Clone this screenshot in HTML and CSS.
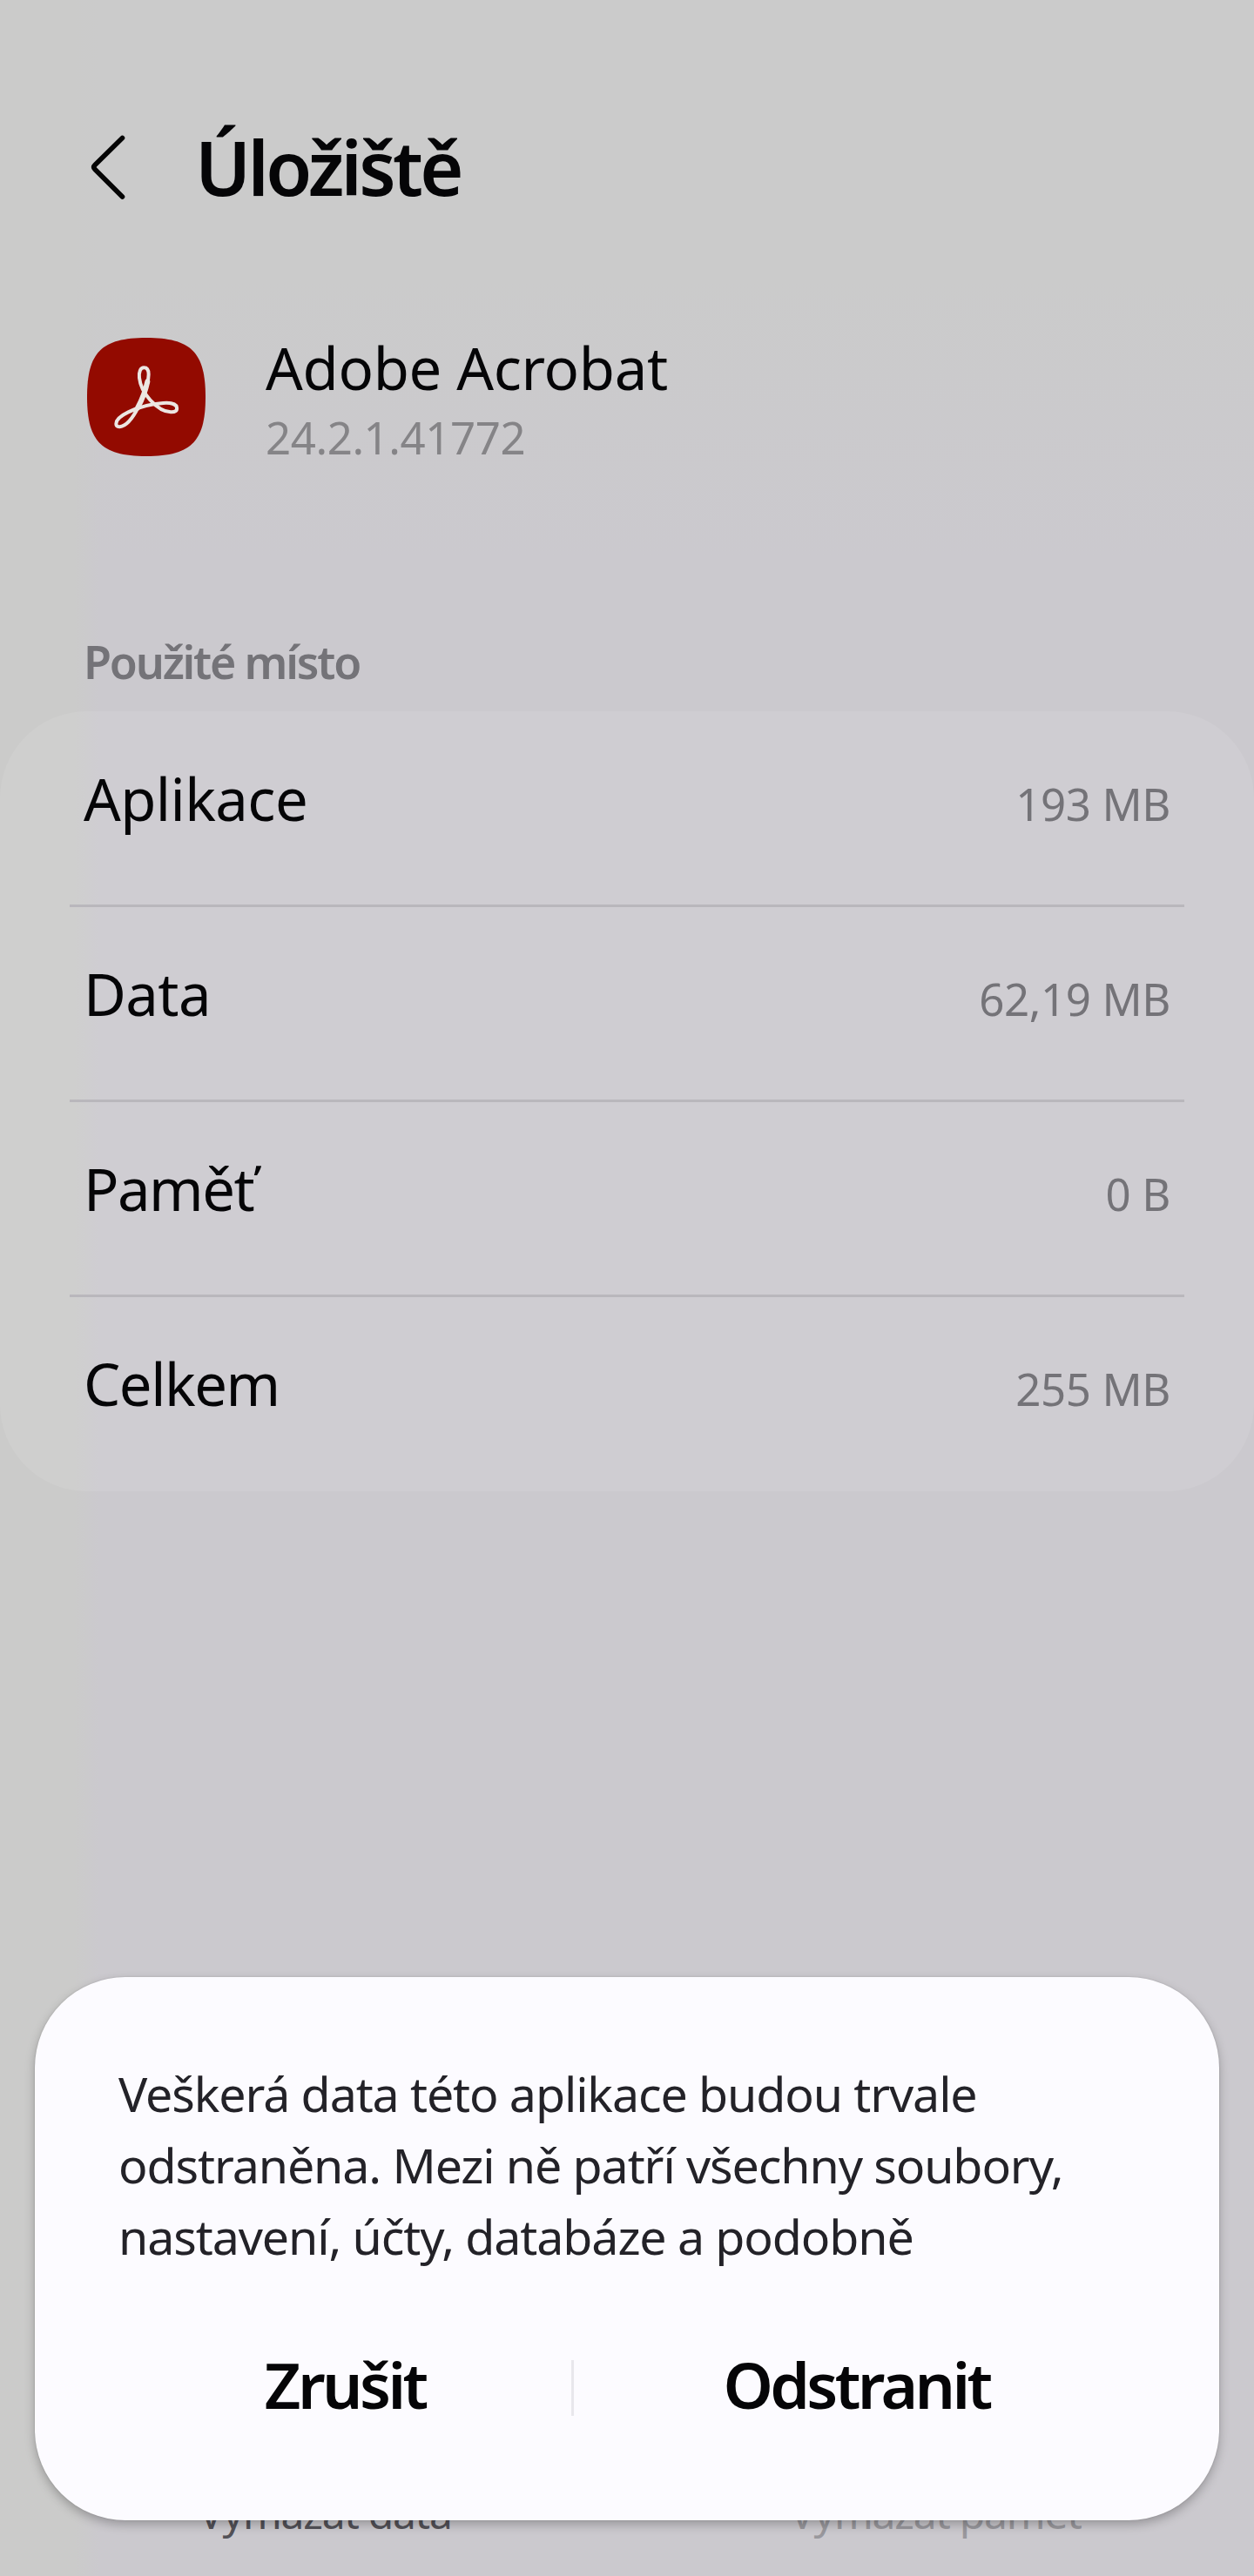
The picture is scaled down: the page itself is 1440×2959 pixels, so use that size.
FILE: index.html
```html
<!DOCTYPE html>
<html lang="cs">
<head>
    <title>Úložiště</title>
    <meta charset="utf-8">
    <link rel="stylesheet" href="styles.css">
</head>
<body>
    <div class="page">
        <header class="header">
            <svg class="back-icon" viewBox="0 0 44 80" fill="none">
                <path d="M38.5 6.5 L7 37.5 Q4.5 40 7 42.5 L38.5 74" stroke="#050505" stroke-width="5.6" stroke-linecap="round" stroke-linejoin="round"/>
            </svg>
            <h1 class="title">Úložiště</h1>
        </header>

        <div class="app">
            <svg class="app-icon" viewBox="30 24 408 408" fill="none">
                <path d="M234 24 C388 24 438 74 438 228 C438 382 388 432 234 432 C80 432 30 382 30 228 C30 74 80 24 234 24 Z" fill="#930a00"/>
                <path d="M226 127 C213 127 208 142 210 162 C213 190 228 217 247 238 C268 261 293 279 318 280 C334 281 341 275 339 264 C337 252 318 247 292 249 C250 252 205 264 172 280 C145 293 130 307 130 320 C130 330 139 333 150 329 C175 320 198 283 215 244 C232 206 242 173 242 150 C242 136 237 127 226 127 Z" stroke="#ece6e2" stroke-width="12" stroke-linejoin="round"/>
                <path d="M238 175 C231 208 221 234 204 266" stroke="#ece6e2" stroke-width="18" stroke-linecap="round"/>
            </svg>
            <div>
                <div class="app-name">Adobe Acrobat</div>
                <div class="app-version">24.2.1.41772</div>
            </div>
        </div>

        <h2 class="section-title">Použité místo</h2>
        <div class="card">
            <div class="row">
                <span class="row-name">Aplikace</span>
                <span class="row-value">193 MB</span>
            </div>
            <div class="row">
                <span class="row-name">Data</span>
                <span class="row-value">62,19 MB</span>
            </div>
            <div class="row">
                <span class="row-name tight">Paměť</span>
                <span class="row-value">0 B</span>
            </div>
            <div class="row">
                <span class="row-name tight">Celkem</span>
                <span class="row-value">255 MB</span>
            </div>
        </div>

        <footer class="footer">
            <div class="footer-btn">Vymazat data</div>
            <div class="footer-btn disabled">Vymazat paměť</div>
        </footer>
    </div>

    <div class="dialog">
        <p class="dialog-text">Veškerá data této aplikace budou trvale<br>odstraněna. Mezi ně patří všechny soubory,<br>nastavení, účty, databáze a podobně</p>
        <div class="dialog-buttons">
            <button class="dialog-btn">Zrušit</button>
            <span class="dialog-divider"></span>
            <button class="dialog-btn">Odstranit</button>
        </div>
    </div>
</body>
</html>
```
FILE: styles.css
```css
* {
    box-sizing: border-box;
}
body {
    margin: 0;
    position: relative;
    width: 1440px;
    height: 2959px;
    overflow: hidden;
    font-family: "Noto Sans", sans-serif;
    color: #050507;
    background: linear-gradient(to right, #cbcbca 85px, transparent 115px),
                linear-gradient(#cbcbcb 320px, #cbc9ce 640px);
}
.page {
    height: 100%;
    display: flex;
    flex-direction: column;
}
.header {
    display: flex;
    align-items: center;
    height: 120px;
    margin-top: 132px;
    padding-left: 102px;
}
.back-icon {
    width: 44px;
    height: 80px;
}
.title {
    margin: 0 0 0 78px;
    font-size: 86px;
    font-weight: 600;
    line-height: 120px;
    letter-spacing: -3.7px;
}
.app {
    display: flex;
    margin-top: 130px;
    padding-left: 100px;
}
.app-icon {
    width: 136px;
    height: 136px;
    margin: 6px 69px 0 0;
}
.app-name {
    font-size: 67px;
    line-height: 80px;
    letter-spacing: -0.3px;
}
.app-version {
    font-size: 51px;
    line-height: 80px;
    letter-spacing: -0.45px;
    color: #858487;
}
.section-title {
    margin: 188px 0 27px 96px;
    font-size: 52px;
    font-weight: 600;
    line-height: 60px;
    letter-spacing: -2.2px;
    color: #747378;
}
.card {
    height: 896px;
    padding: 1px 80px 0;
    border-radius: 100px;
    background-color: rgba(255, 255, 255, 0.09);
}
.row {
    display: flex;
    justify-content: space-between;
    align-items: baseline;
    height: 224px;
    padding: 0 16px;
    border-bottom: 3px solid #b9b7bc;
}
.row:last-child {
    border-bottom: none;
}
.row-name {
    font-size: 67px;
    line-height: 198px;
    letter-spacing: -0.6px;
}
.row-name.tight {
    letter-spacing: -1.5px;
}
.row-value {
    font-size: 51px;
    line-height: 70px;
    letter-spacing: -0.4px;
    color: #747378;
}
.footer {
    display: flex;
    height: 144px;
    margin-top: auto;
    padding-left: 228px;
    font-size: 48px;
    line-height: 144px;
    letter-spacing: -1.2px;
    color: #535258;
}
.footer-btn {
    width: 679px;
}
.footer-btn.disabled {
    width: 400px;
    color: #99989d;
}
.dialog {
    position: absolute;
    left: 40px;
    top: 2271px;
    width: 1360px;
    height: 624px;
    padding: 93px 90px 0 96px;
    border-radius: 104px;
    background-color: #fcfbff;
    box-shadow: 0 5px 12px rgba(0, 0, 0, 0.25), 0 0 2px rgba(0, 0, 0, 0.15);
}
.dialog-text {
    margin: 0;
    font-size: 55.5px;
    line-height: 82px;
    letter-spacing: -1.1px;
    color: #232228;
}
.dialog-buttons {
    display: flex;
    align-items: center;
    height: 120px;
    margin-top: 69px;
}
.dialog-btn {
    width: 520px;
    padding: 0;
    border: none;
    background: none;
    font-family: inherit;
    font-size: 73px;
    font-weight: 600;
    line-height: 120px;
    letter-spacing: -3.6px;
    color: #050507;
}
.dialog-btn:last-child {
    width: 649px;
}
.dialog-divider {
    width: 3px;
    height: 64px;
    margin-top: 8px;
    background-color: #e8e7ec;
}
```
